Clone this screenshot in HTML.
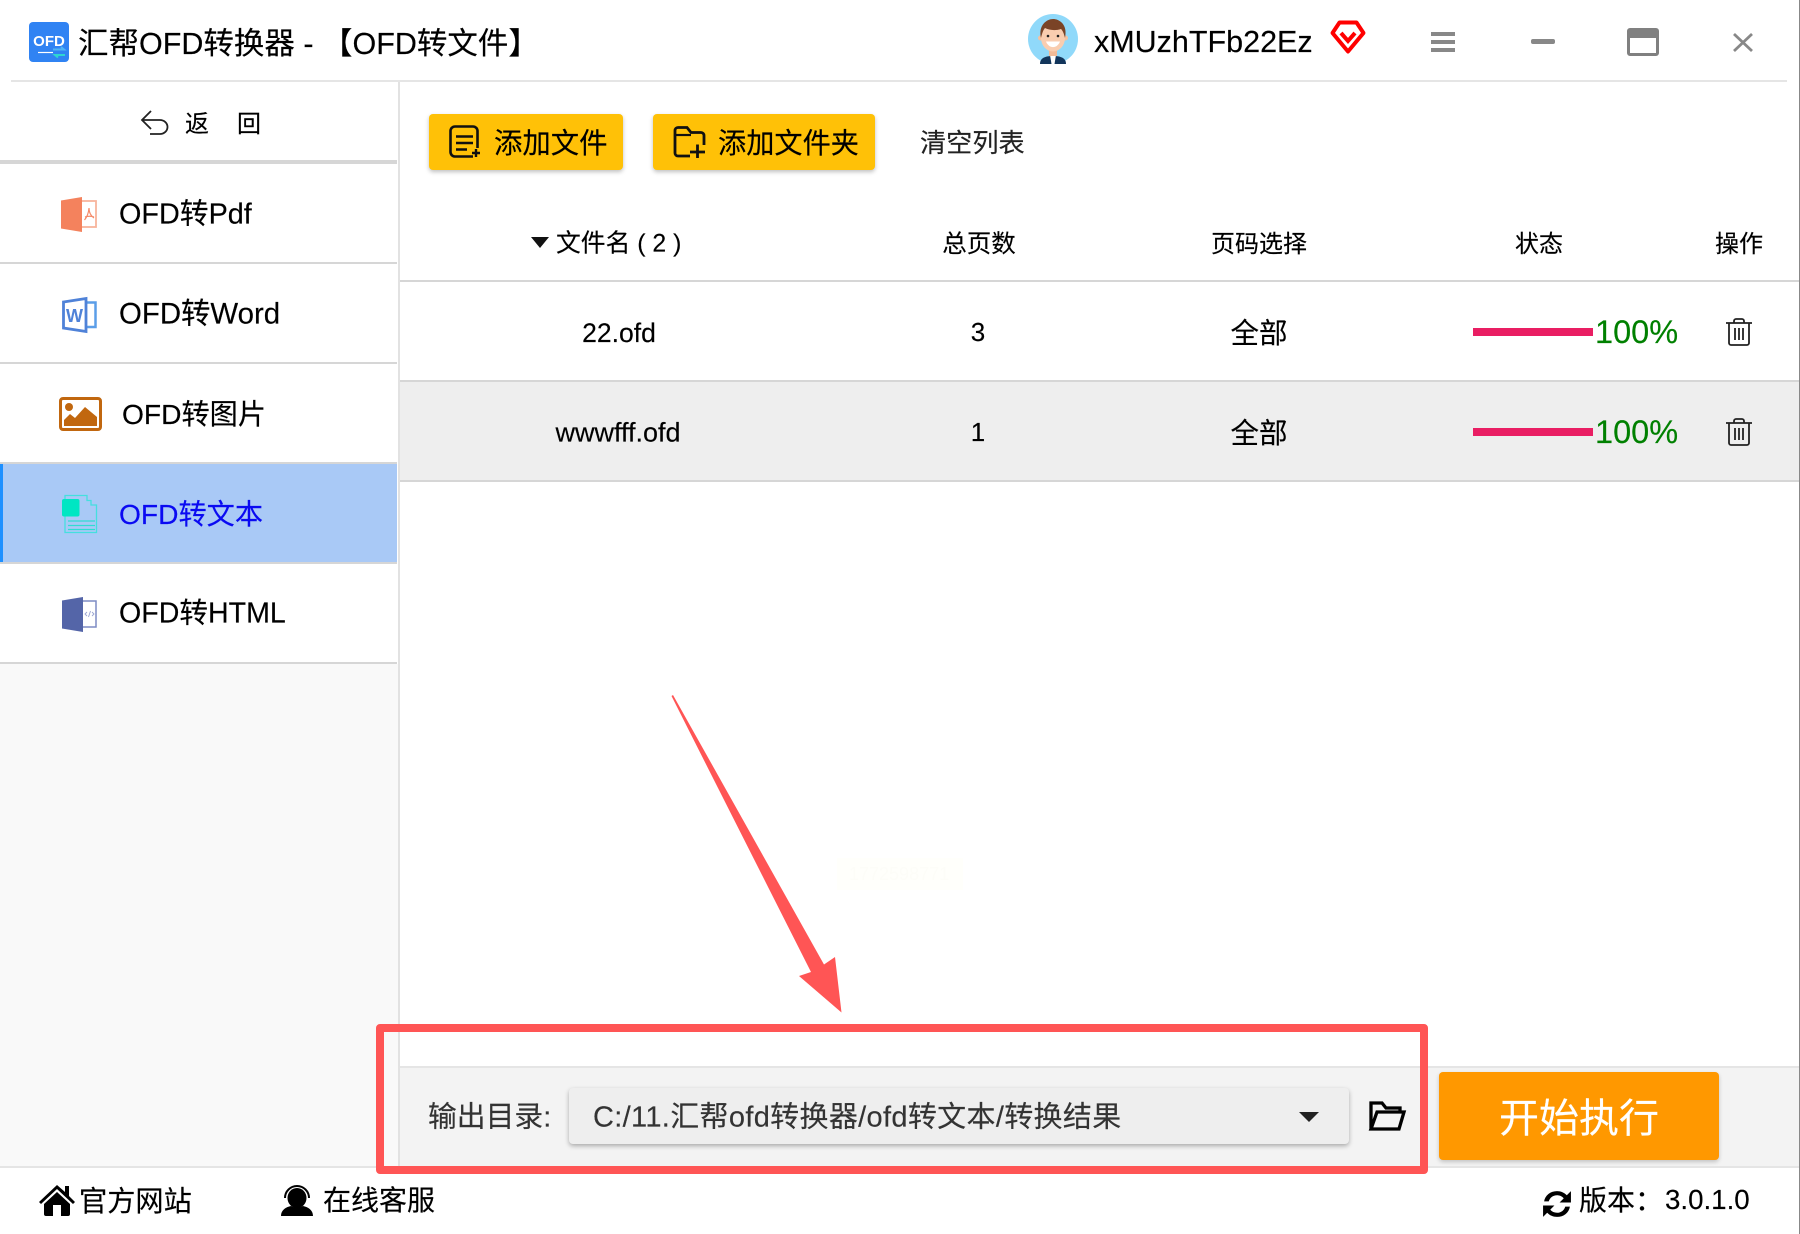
<!DOCTYPE html>
<html lang="zh"><head><meta charset="utf-8"><title>汇帮OFD转换器</title>
<style>
html,body{margin:0;padding:0;background:#fff}
#a{position:relative;width:1800px;height:1234px;overflow:hidden;background:#fff;font-family:"Liberation Sans","Noto Sans CJK SC",sans-serif;color:#000;-webkit-text-stroke:.15px currentColor}
.t{position:absolute;white-space:nowrap;line-height:1;transform:translateY(-50%)}
.c{position:absolute;white-space:nowrap;line-height:1;transform:translate(-50%,-50%)}
.r{position:absolute}
svg{position:absolute;overflow:visible}
</style></head><body><div id="a">
<!-- structure -->
<div class="r" style="left:11px;top:80px;width:1776px;height:2px;background:#e5e5e5"></div>
<div class="r" style="left:398px;top:82px;width:2px;height:1084px;background:#e2e2e2"></div>
<div class="r" style="left:0;top:664px;width:398px;height:502px;background:#f9f9f9"></div>
<div class="r" style="left:0;top:160px;width:397px;height:4px;background:#d6d6d6"></div>
<div class="r" style="left:0;top:262px;width:397px;height:2px;background:#d6d6d6"></div>
<div class="r" style="left:0;top:362px;width:397px;height:2px;background:#d6d6d6"></div>
<div class="r" style="left:0;top:462px;width:397px;height:2px;background:#d6d6d6"></div>
<div class="r" style="left:0;top:464px;width:397px;height:98px;background:#a9c9f6"></div>
<div class="r" style="left:0;top:464px;width:3px;height:98px;background:#1e90ff"></div>
<div class="r" style="left:0;top:562px;width:397px;height:2px;background:#d6d6d6"></div>
<div class="r" style="left:0;top:662px;width:397px;height:2px;background:#d6d6d6"></div>
<div class="r" style="left:400px;top:280px;width:1400px;height:2px;background:#d6d6d6"></div>
<div class="r" style="left:400px;top:380px;width:1400px;height:2px;background:#d6d6d6"></div>
<div class="r" style="left:400px;top:382px;width:1400px;height:98px;background:#eee"></div>
<div class="r" style="left:400px;top:480px;width:1400px;height:2px;background:#d6d6d6"></div>
<div class="r" style="left:400px;top:1066px;width:1400px;height:2px;background:#e5e5e5"></div>
<div class="r" style="left:400px;top:1068px;width:1400px;height:98px;background:#f3f3f3"></div>
<div class="r" style="left:0;top:1166px;width:1800px;height:2px;background:#e5e5e5"></div>
<div class="r" style="left:1799px;top:0;width:1px;height:1234px;background:#888"></div>

<!-- title bar -->
<svg style="left:29px;top:22px" width="40" height="40" viewBox="0 0 40 40"><rect width="40" height="40" rx="4" fill="#3083f3"/><text x="20" y="24" font-size="15" font-weight="700" text-anchor="middle" fill="#fff" stroke="none" font-family="Liberation Sans">OFD</text><path d="M9 30.500H24" stroke="#fff" stroke-width="1.200"/><path d="M24 27.500h11l-3-2.500" stroke="#4fb4f5" stroke-width="2" fill="none"/><path d="M36 33h-10l3 2.500" stroke="#2fd6d0" stroke-width="2" fill="none"/></svg>
<div class="t" style="left:78px;top:43.500px;font-size:30.500px">汇帮OFD转换器 - 【OFD转文件】</div>
<svg style="left:1028px;top:14px" width="50" height="50" viewBox="0 0 50 50"><circle cx="25" cy="25" r="25" fill="#90d9fa"/><path d="M12 50c0-6 5-8 13-8s13 2 13 8z" fill="#12355b"/><path d="M22 41h6l-1.500 9h-3z" fill="#fff"/><rect x="21" y="32" width="8" height="10" fill="#f2bb98"/><circle cx="12.500" cy="24" r="2.500" fill="#f5c2a0"/><circle cx="37.500" cy="24" r="2.500" fill="#f5c2a0"/><ellipse cx="25" cy="24" rx="12" ry="13.500" fill="#f9cdb0"/><path d="M13 24c-3-13 6-19 12-19s15 5 12 19c-1-4-2-7-4-9-6 2-12 1-16-1-2 2-3 6-4 10z" fill="#7a4326"/><circle cx="20" cy="22" r="1.300" fill="#222"/><circle cx="30" cy="22" r="1.300" fill="#222"/><path d="M18 27.500c3 7.500 11 7.500 14 0z" fill="#fff"/></svg>
<div class="t" style="left:1094px;top:42px;font-size:30.500px">xMUzhTFb22Ez</div>
<svg style="left:1330px;top:20px" width="36" height="34" viewBox="0 0 36 34"><path d="M9.500 2.500H26.500L33.500 13 18 31.500 2.500 13z" fill="none" stroke="#f00" stroke-width="4" stroke-linejoin="round"/><path d="M11 13l7 8 7-8" fill="none" stroke="#f00" stroke-width="4"/></svg>
<div class="r" style="left:1431px;top:32px;width:24px;height:4px;background:#888"></div>
<div class="r" style="left:1431px;top:40px;width:24px;height:4px;background:#888"></div>
<div class="r" style="left:1431px;top:48px;width:24px;height:4px;background:#888"></div>
<div class="r" style="left:1531px;top:39px;width:24px;height:5px;border-radius:2px;background:#888"></div>
<div class="r" style="left:1627px;top:28px;width:32px;height:28px;box-sizing:border-box;border:3px solid #808080;border-top-width:10px;border-radius:3px"></div>
<svg style="left:1733px;top:33px" width="20" height="19" viewBox="0 0 20 19"><path d="M1 1L19 18M19 1L1 18" stroke="#888" stroke-width="2.800" fill="none"/></svg>

<!-- sidebar -->
<svg style="left:141px;top:110px" width="28" height="25" viewBox="0 0 28 25"><path d="M10 1L1 10l9 9M1 10h18a7.500 7 0 0 1 0 14H9" fill="none" stroke="#222" stroke-width="1.800"/></svg>
<div class="t" style="left:185px;top:125px;font-size:24px">返</div>
<div class="t" style="left:237px;top:125px;font-size:24px">回</div>

<svg style="left:61px;top:197px" width="36" height="35" viewBox="0 0 36 35"><rect x="20" y="4" width="15" height="26" fill="none" stroke="#f8b49d" stroke-width="1.800"/><path d="M0 3.500L21 0V35L0 31.500z" fill="#f4825d"/><path d="M28 11c-.5 6-2 9-4.500 12M28 11c0 5 2 8 5 10M24 20c3-1 6-1 9 0" stroke="#f58a68" stroke-width="1.200" fill="none"/></svg>
<div class="t" style="left:119px;top:214.500px;font-size:28.800px">OFD转Pdf</div>

<svg style="left:62px;top:297px" width="35" height="36" viewBox="0 0 35 36"><path d="M24 5.500H33.500V30H24" fill="none" stroke="#5b9ee8" stroke-width="2.500"/><path d="M1.500 5L24 1.500V34.500L1.500 31z" fill="#fff" stroke="#4f82d8" stroke-width="2.800"/><text x="12.500" y="25" font-size="18" font-weight="700" text-anchor="middle" fill="#4f82d8" font-family="Liberation Sans">W</text></svg>
<div class="t" style="left:119px;top:314px;font-size:29.400px">OFD转Word</div>

<svg style="left:59px;top:397px" width="43" height="34" viewBox="0 0 43 34"><rect x="1.500" y="1.500" width="40" height="31" rx="2.500" fill="#fff" stroke="#c1670f" stroke-width="3"/><circle cx="10" cy="10" r="4" fill="#c1670f"/><path d="M5 29V23l6-6 5 4 10-11 12 10v9z" fill="#c1670f"/></svg>
<div class="t" style="left:122px;top:414px;font-size:28.200px">OFD转图片</div>

<svg style="left:62px;top:494px" width="35" height="40" viewBox="0 0 35 40"><path d="M3 5V1.500H25V6.500H29V11H34.500V38.500H3V22" fill="none" stroke="#45dfdf" stroke-width="1.300"/><rect x="0" y="5" width="17.500" height="17.500" rx="2" fill="#00e6c3"/><path d="M6 27H33M6 31.500H33M6 35.500H33" stroke="#30dcd2" stroke-width="1.300"/></svg>
<div class="t" style="left:119px;top:513.500px;font-size:28.200px;color:#0a0af2">OFD转文本</div>

<svg style="left:62px;top:597px" width="35" height="35" viewBox="0 0 35 35"><rect x="20" y="4" width="14" height="26" fill="none" stroke="#7d8bc4" stroke-width="1.500"/><path d="M0 3.500L21 0V35L0 31.500z" fill="#5465a8"/><path d="M25 15l-2 2 2 2M30 15l2 2-2 2M28.500 14l-2 6" stroke="#9aa5d2" stroke-width=".9" fill="none"/></svg>
<div class="t" style="left:119px;top:614px;font-size:28.600px">OFD转HTML</div>

<!-- toolbar -->
<div class="r" style="left:429px;top:114px;width:194px;height:56px;background:#ffc107;border-radius:4px;box-shadow:0 2px 4px rgba(0,0,0,.25)"></div>
<svg style="left:449px;top:125px" width="32" height="33" viewBox="0 0 32 33"><path d="M24 31.500H6a4.500 4.500 0 0 1-4.500-4.500V6a4.500 4.500 0 0 1 4.500-4.500H24a4.500 4.500 0 0 1 4.500 4.500V23" fill="none" stroke="#111" stroke-width="2.600"/><path d="M7 11.500H24M7 18H24M7 24.500H18" stroke="#111" stroke-width="2.400"/><path d="M23 28h8M27 24v8" stroke="#111" stroke-width="2.400"/></svg>
<div class="t" style="left:494px;top:143.500px;font-size:28.400px">添加文件</div>
<div class="r" style="left:653px;top:114px;width:222px;height:56px;background:#ffc107;border-radius:4px;box-shadow:0 2px 4px rgba(0,0,0,.25)"></div>
<svg style="left:673px;top:126px" width="33" height="32" viewBox="0 0 33 32"><path d="M17 30H5a3 3 0 0 1-3-3V4.500a3 3 0 0 1 3-3h9l4 5h10a3 3 0 0 1 3 3V19" fill="none" stroke="#111" stroke-width="2.800"/><path d="M2 9H18" stroke="#111" stroke-width="2.200"/><path d="M17 26H32M24.500 18.500V32" stroke="#111" stroke-width="2.800"/></svg>
<div class="t" style="left:718px;top:143px;font-size:28.200px">添加文件夹</div>
<div class="t" style="left:920px;top:143px;font-size:26.200px;color:#222">清空列表</div>

<!-- table header -->
<svg style="left:531px;top:237px" width="18" height="11" viewBox="0 0 18 11"><path d="M0 0H18L9 11z" fill="#111"/></svg>
<div class="t" style="left:556px;top:244.500px;font-size:24.800px">文件名 ( 2 )</div>
<div class="c" style="left:979px;top:244.500px;font-size:24.500px">总页数</div>
<div class="c" style="left:1259px;top:244.500px;font-size:24px">页码选择</div>
<div class="c" style="left:1539px;top:244.500px;font-size:24px">状态</div>
<div class="c" style="left:1739px;top:244.500px;font-size:24px">操作</div>

<!-- rows -->
<div class="c" style="left:619px;top:332.500px;font-size:26.500px">22.ofd</div>
<div class="c" style="left:978px;top:332px;font-size:26px">3</div>
<div class="c" style="left:1259px;top:334px;font-size:28.500px">全部</div>
<div class="r" style="left:1473px;top:328px;width:120px;height:8px;background:#e91e63"></div>
<div class="t" style="left:1595px;top:332px;font-size:32.500px;color:#008000">100%</div>
<svg style="left:1725px;top:318px" width="28" height="28" viewBox="0 0 28 28"><path d="M1 5H27M9 5V3a2 2 0 0 1 2-2h6a2 2 0 0 1 2 2v2M4 5V25a2 2 0 0 0 2 2H22a2 2 0 0 0 2-2V5M10 10V22M14 10V22M18 10V22" fill="none" stroke="#222" stroke-width="1.800"/></svg>

<div class="c" style="left:618px;top:432.500px;font-size:27px">wwwfff.ofd</div>
<div class="c" style="left:978px;top:432px;font-size:26px">1</div>
<div class="c" style="left:1259px;top:434px;font-size:28.500px">全部</div>
<div class="r" style="left:1473px;top:428px;width:120px;height:8px;background:#e91e63"></div>
<div class="t" style="left:1595px;top:432px;font-size:32.500px;color:#008000">100%</div>
<svg style="left:1725px;top:418px" width="28" height="28" viewBox="0 0 28 28"><path d="M1 5H27M9 5V3a2 2 0 0 1 2-2h6a2 2 0 0 1 2 2v2M4 5V25a2 2 0 0 0 2 2H22a2 2 0 0 0 2-2V5M10 10V22M14 10V22M18 10V22" fill="none" stroke="#222" stroke-width="1.800"/></svg>

<!-- watermark -->
<div class="r" style="left:837px;top:858px;width:126px;height:32px;background:#fffffb"></div>
<div class="t" style="left:849px;top:874px;font-size:18px;color:#fdfdf8;-webkit-text-stroke:0">1772598771</div>

<!-- bottom bar -->
<div class="t" style="left:428px;top:1118px;font-size:28.800px;color:#333">输出目录:</div>
<div class="r" style="left:569px;top:1088px;width:780px;height:56px;background:#eee;border-radius:4px;box-shadow:0 2px 5px rgba(0,0,0,.3)"></div>
<div class="t" style="left:593px;top:1118px;font-size:29px;color:#333;letter-spacing:.33px">C:/11.汇帮ofd转换器/ofd转文本/转换结果</div>
<svg style="left:1299px;top:1112px" width="20" height="10" viewBox="0 0 20 10"><path d="M0 0H20L10 10z" fill="#222"/></svg>
<svg style="left:1369px;top:1101px" width="37" height="30" viewBox="0 0 37 30"><path d="M2 28V2H13L17 7H31V11M2 28H30L35 11H8L2 28z" fill="none" stroke="#000" stroke-width="3.300"/></svg>
<div class="r" style="left:1439px;top:1072px;width:280px;height:88px;background:#ff9800;border-radius:4px;box-shadow:0 2px 4px rgba(0,0,0,.2)"></div>
<div class="c" style="left:1579px;top:1119px;font-size:40px;color:#fff">开始执行</div>

<!-- annotation -->
<div class="r" style="left:376px;top:1024px;width:1052px;height:150px;box-sizing:border-box;border:8px solid #ff5555;border-radius:4px"></div>
<svg style="left:0;top:0" width="1800" height="1234" viewBox="0 0 1800 1234"><path d="M671.500 696L673 695 824 964.500 835 957 841.500 1012.500 799 976 811 972z" fill="#ff5555"/></svg>

<!-- footer -->
<svg style="left:39px;top:1184px" width="36" height="32" viewBox="0 0 36 32"><path d="M18 1L0 18l2 2L18 5l16 15 2-2-6-6V2h-4v6z" fill="#000"/><path d="M18 8L5 20V30a2 2 0 0 0 2 2H14V21h8V32H29a2 2 0 0 0 2-2V20z" fill="#000"/></svg>
<div class="t" style="left:79px;top:1201px;font-size:28.200px">官方网站</div>
<svg style="left:281px;top:1184px" width="32" height="32" viewBox="0 0 32 32"><path d="M4 14a12 12 0 0 1 24 0" fill="none" stroke="#000" stroke-width="2"/><ellipse cx="16" cy="14" rx="9.500" ry="10" fill="#000"/><path d="M0 32c0-6 5-9 10-10 3 2 9 2 12 0 5 1 10 4 10 10z" fill="#000"/></svg>
<div class="t" style="left:323px;top:1201px;font-size:28px">在线客服</div>
<svg style="left:1541px;top:1188px" width="32" height="32" viewBox="0 0 31 31"><path d="M3 13C4 7 9 3 15.500 3c4 0 7 1.500 9.500 4l4-4v11H18l4-4c-1.500-2-4-3-6.500-3-4 0-7 2.500-8 6z" fill="#000"/><path d="M28 18c-1 6-6 10-12.500 10-4 0-7-1.500-9.500-4l-4 4V17h11l-4 4c1.500 2 4 3 6.500 3 4 0 7-2.500 8-6z" fill="#000"/></svg>
<div class="t" style="left:1579px;top:1200.500px;font-size:28px">版本：</div>
<div class="t" style="left:1665px;top:1200px;font-size:27.700px">3.0.1.0</div>
</div></body></html>
